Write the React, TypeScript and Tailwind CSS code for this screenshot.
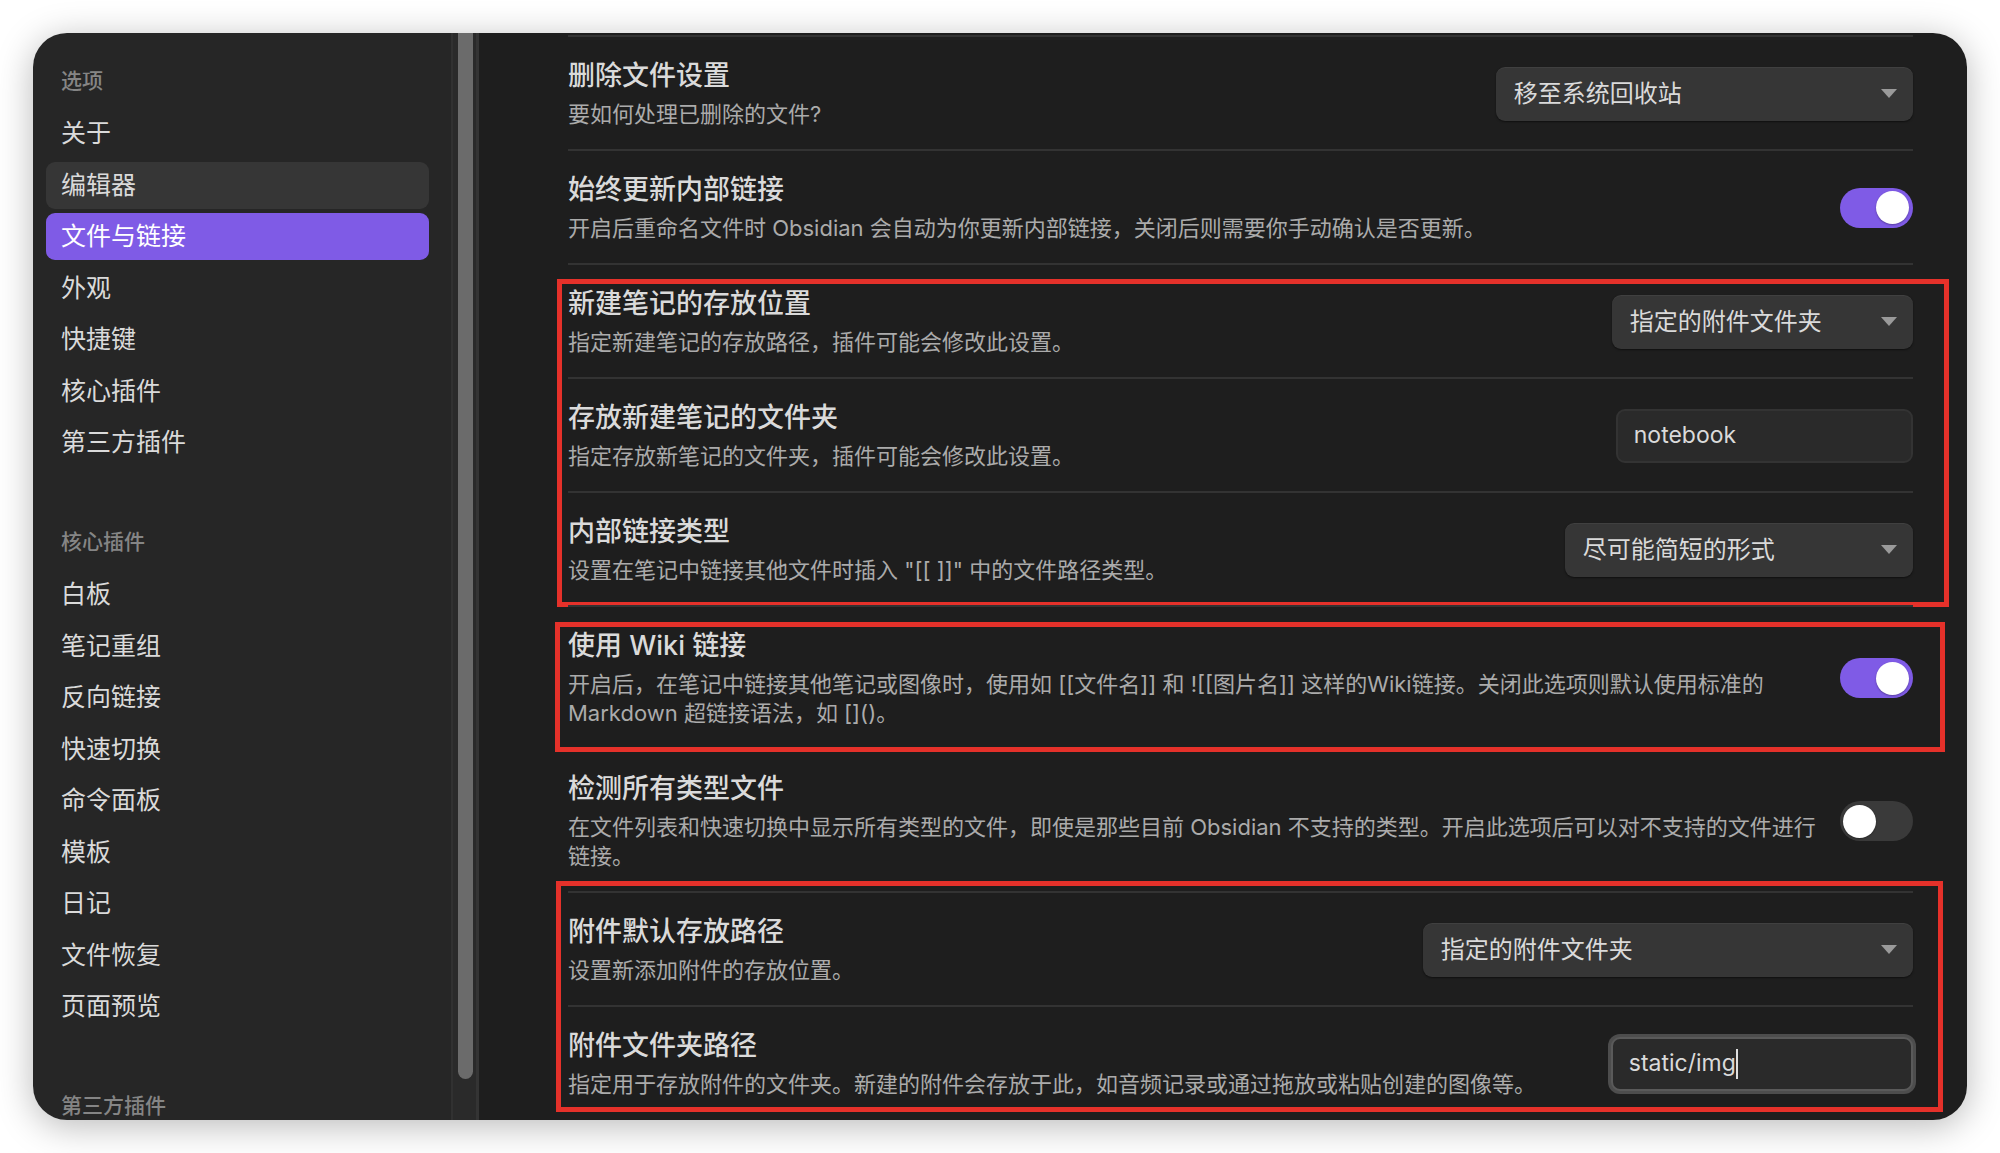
import type { ReactNode } from 'react';

// --- Sidebar data ---

const OPTIONS = ['关于', '编辑器', '文件与链接', '外观', '快捷键', '核心插件', '第三方插件'];
const CORE_PLUGINS = ['白板', '笔记重组', '反向链接', '快速切换', '命令面板', '模板', '日记', '文件恢复', '页面预览'];

function NavHeader({ label, className = '' }: { label: string; className?: string }) {
  return (
    <div className={`h-[30px] pl-[15px] text-[21px] leading-[30px] font-medium text-[#858585] ${className}`}>
      {label}
    </div>
  );
}

function NavItem({ label }: { label: string }) {
  const active = label === '文件与链接';
  const hovered = label === '编辑器';
  return (
    <div
      className={`h-[47px] rounded-[9px] pl-[15px] text-[25px] leading-[47px] ${
        active ? 'bg-[#7f5be6] text-white' : hovered ? 'bg-[#363636] text-[#dadada]' : 'text-[#dadada]'
      }`}
    >
      {label}
    </div>
  );
}

// --- Controls ---

function Dropdown({ label, width }: { label: string; width: string }) {
  return (
    <div
      className={`${width} h-[54px] shrink-0 rounded-[9px] bg-[#363636] pl-[18px] pr-[16px] flex items-center justify-between shadow-[0_1px_2px_rgba(0,0,0,0.5),inset_0_1px_0_rgba(255,255,255,0.05)]`}
    >
      <span className="text-[24px] text-[#dadada]">{label}</span>
      <svg width="16" height="10" viewBox="0 0 16 10">
        <polygon points="0,0 16,0 8,9" fill="#9a9a9a" />
      </svg>
    </div>
  );
}

function TextInput({ value, width, focused = false }: { value: string; width: string; focused?: boolean }) {
  return (
    <div
      className={`${width} h-[54px] shrink-0 rounded-[9px] bg-[#2a2a2a] pl-[16px] flex items-center ${
        focused ? 'border-2 border-[#5a5a5a] ring-[3px] ring-[#4d4d4d]' : 'border-2 border-[#333333]'
      }`}
    >
      <span className="text-[23px] text-[#dadada]">{value}</span>
      {focused && <span className="inline-block w-[2px] h-[30px] bg-[#e0e0e0]" />}
    </div>
  );
}

function Toggle({ on }: { on: boolean }) {
  return (
    <div
      className={`w-[73px] h-[40px] shrink-0 rounded-full p-[3.5px] flex ${
        on ? 'bg-[#7f5be6] justify-end' : 'bg-[#3a3a3a] justify-start'
      }`}
    >
      <div className="w-[33px] h-[33px] rounded-full bg-white shadow-[0_1px_2px_rgba(0,0,0,0.3)]" />
    </div>
  );
}

// --- Setting row ---

function Setting({ title, desc, control }: { title: string; desc: string[]; control: ReactNode }) {
  return (
    <div className="flex items-center border-t-2 border-[#333333] pt-[21px] pb-[20px]">
      <div className="flex-1 min-w-0 pr-[24px]">
        <div className="h-[36px] text-[27px] leading-[36px] font-medium text-[#dadada]">{title}</div>
        <div className="mt-[6px] text-[22px] leading-[29px] text-[#ababab]">
          {desc.map(line => (
            <div key={line} className="whitespace-nowrap">{line}</div>
          ))}
        </div>
      </div>
      {control}
    </div>
  );
}

function Marked({ children, box }: { children: ReactNode; box: string }) {
  return (
    <div className="relative">
      {children}
      <div className={`absolute ${box} border-[5px] border-[#e5312a] pointer-events-none`} />
    </div>
  );
}

export default function App() {
  return (
    <div className="w-[2000px] h-[1153px] bg-white overflow-hidden pt-[33px] pl-[33px] font-['Inter','Noto_Sans_CJK_SC',sans-serif]">
      <div className="w-[1934px] h-[1087px] rounded-[34px] overflow-hidden flex shadow-[0_6px_36px_rgba(0,0,0,0.28)]">
        {/* Sidebar */}
        <div className="w-[420px] shrink-0 bg-[#262626] border-r-2 border-[#313131] pt-[33px] pl-[13px] pr-[22px]">
          <NavHeader label="选项" className="mb-[14px]" />
          <div className="flex flex-col gap-[4.5px]">
            {OPTIONS.map(o => <NavItem key={o} label={o} />)}
          </div>
          <NavHeader label="核心插件" className="mt-[61px] mb-[14px]" />
          <div className="flex flex-col gap-[4.5px]">
            {CORE_PLUGINS.map(o => <NavItem key={o} label={o} />)}
          </div>
          <NavHeader label="第三方插件" className="mt-[61px]" />
        </div>

        {/* Scrollbar */}
        <div className="w-[26px] shrink-0 bg-[#2a2a2a] border-r-[3px] border-[#343434] pl-[5px]">
          <div className="w-[15px] h-[1046px] rounded-b-full bg-[#6b6b6b]" />
        </div>

        {/* Content */}
        <div className="flex-1 bg-[#1e1e1e] pl-[89px] pr-[55px] pt-[2px]">
          <Setting
            title="删除文件设置"
            desc={['要如何处理已删除的文件?']}
            control={<Dropdown label="移至系统回收站" width="w-[417px]" />}
          />
          <Setting
            title="始终更新内部链接"
            desc={['开启后重命名文件时 Obsidian 会自动为你更新内部链接，关闭后则需要你手动确认是否更新。']}
            control={<Toggle on />}
          />
          <Marked box="left-[-11px] right-[-36px] top-[16px] bottom-[-2px]">
            <Setting
              title="新建笔记的存放位置"
              desc={['指定新建笔记的存放路径，插件可能会修改此设置。']}
              control={<Dropdown label="指定的附件文件夹" width="w-[301px]" />}
            />
            <Setting
              title="存放新建笔记的文件夹"
              desc={['指定存放新笔记的文件夹，插件可能会修改此设置。']}
              control={<TextInput value="notebook" width="w-[297px]" />}
            />
            <Setting
              title="内部链接类型"
              desc={['设置在笔记中链接其他文件时插入 "[[ ]]" 中的文件路径类型。']}
              control={<Dropdown label="尽可能简短的形式" width="w-[348px]" />}
            />
          </Marked>
          <Marked box="left-[-13px] right-[-32px] top-[17px] bottom-[-4px]">
            <Setting
              title="使用 Wiki 链接"
              desc={[
                '开启后，在笔记中链接其他笔记或图像时，使用如 [[文件名]] 和 ![[图片名]] 这样的Wiki链接。关闭此选项则默认使用标准的',
                'Markdown 超链接语法，如 []()。',
              ]}
              control={<Toggle on />}
            />
          </Marked>
          <Setting
            title="检测所有类型文件"
            desc={[
              '在文件列表和快速切换中显示所有类型的文件，即使是那些目前 Obsidian 不支持的类型。开启此选项后可以对不支持的文件进行',
              '链接。',
            ]}
            control={<Toggle on={false} />}
          />
          <Marked box="left-[-12px] right-[-30px] top-[-10px] bottom-[7px]">
            <Setting
              title="附件默认存放路径"
              desc={['设置新添加附件的存放位置。']}
              control={<Dropdown label="指定的附件文件夹" width="w-[490px]" />}
            />
            <Setting
              title="附件文件夹路径"
              desc={['指定用于存放附件的文件夹。新建的附件会存放于此，如音频记录或通过拖放或粘贴创建的图像等。']}
              control={<TextInput value="static/img" width="w-[302px]" focused />}
            />
          </Marked>
        </div>
      </div>
    </div>
  );
}
